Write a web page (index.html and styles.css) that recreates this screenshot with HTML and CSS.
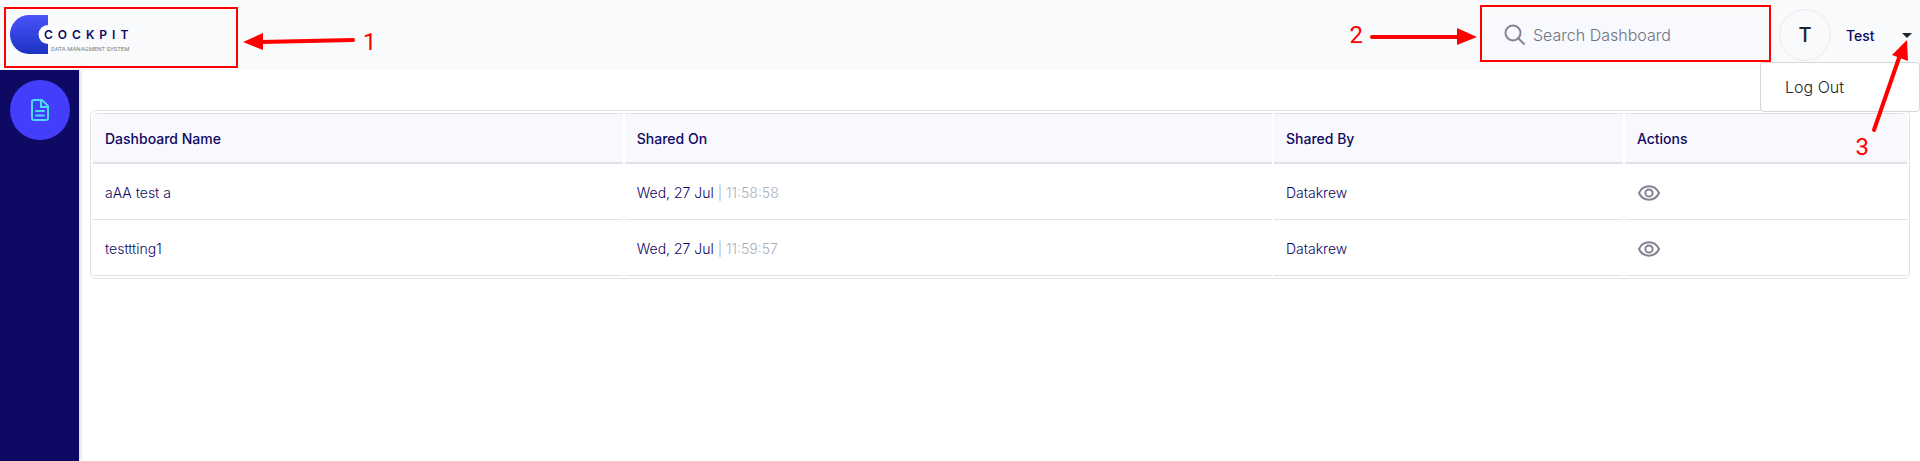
FILE: index.html
```html
<!DOCTYPE html>
<html lang="en">
  <head>
    <meta charset="UTF-8" />
    <meta name="viewport" content="width=device-width, initial-scale=1.0" />
    <title>Cockpit</title>
    <link rel="stylesheet" href="styles.css">
  </head>
  <body>
    <header class="topbar">
      <a href="#" class="brand">
        <svg class="brand-mark" width="60" height="40" viewBox="0 0 60 40" aria-hidden="true">
          <defs>
            <linearGradient id="brand-fill" x1="0" y1="0" x2="0" y2="1">
              <stop offset="0" stop-color="#4a54fb" />
              <stop offset="1" stop-color="#1a32c0" />
            </linearGradient>
          </defs>
          <path d="M19 0H38V39H19A19 19.500 0 0 1 19 0Z" fill="url(#brand-fill)" />
          <path d="M38 10H59V29H38A9.500 9.500 0 0 1 38 10Z" fill="#fff" />
        </svg>
        <span class="brand-text">
          <span class="brand-name">COCKPIT</span>
          <span class="brand-tagline">DATA MANAGMENT SYSTEM</span>
        </span>
      </a>

      <div class="topbar-right">
        <form class="search">
          <label for="search" aria-label="Search Dashboard">
            <svg width="22" height="22" viewBox="0 0 22 22" fill="none" stroke="#858592" stroke-width="2">
              <circle cx="9" cy="9" r="7.500" />
              <path d="M14 14L20.500 20.500" />
            </svg>
          </label>
          <input type="text" id="search" placeholder="Search Dashboard" />
        </form>
        <div class="avatar">T</div>
        <span class="user-name">Test</span>
        <button type="button" class="caret" aria-label="Account menu">
          <svg width="10" height="5" viewBox="0 0 10 5"><path d="M0 0H10L5 5Z" fill="#212529" /></svg>
        </button>
        <div class="user-menu">
          <a href="#">Log Out</a>
        </div>
      </div>
    </header>

    <div class="layout">
      <nav class="sidebar">
        <a href="#" class="nav-item" aria-label="Dashboards">
          <svg width="18" height="22" viewBox="0 0 18 22" fill="none" stroke="#4fd8f5" stroke-width="2" stroke-linejoin="round" stroke-linecap="round">
            <path d="M3 1H11L17 7V19A2 2 0 0 1 15 21H3A2 2 0 0 1 1 19V3A2 2 0 0 1 3 1Z" />
            <path d="M10 1V8H17" />
            <path d="M5 12H13M5 16.500H13" />
          </svg>
        </a>
      </nav>

      <main class="content">
        <table class="dashboards">
          <colgroup>
            <col class="col-name" />
            <col class="col-date" />
            <col class="col-owner" />
            <col class="col-actions" />
          </colgroup>
          <thead>
            <tr>
              <th>Dashboard Name</th>
              <th>Shared On</th>
              <th>Shared By</th>
              <th>Actions</th>
            </tr>
          </thead>
          <tbody>
            <tr>
              <td>aAA test a</td>
              <td>Wed, 27 Jul <span class="time">| 11:58:58</span></td>
              <td>Datakrew</td>
              <td>
                <button type="button" class="view" aria-label="View aAA test a">
                  <svg width="24" height="16" viewBox="0 0 24 16" fill="none" stroke="#858592" stroke-width="2">
                    <path d="M2 8C4 3.700 7.700 1.300 12 1.300S20 3.700 22 8C20 12.300 16.300 14.700 12 14.700S4 12.300 2 8Z" />
                    <circle cx="12" cy="8" r="3.600" />
                  </svg>
                </button>
              </td>
            </tr>
            <tr>
              <td>testtting1</td>
              <td>Wed, 27 Jul <span class="time">| 11:59:57</span></td>
              <td>Datakrew</td>
              <td>
                <button type="button" class="view" aria-label="View testtting1">
                  <svg width="24" height="16" viewBox="0 0 24 16" fill="none" stroke="#858592" stroke-width="2">
                    <path d="M2 8C4 3.700 7.700 1.300 12 1.300S20 3.700 22 8C20 12.300 16.300 14.700 12 14.700S4 12.300 2 8Z" />
                    <circle cx="12" cy="8" r="3.600" />
                  </svg>
                </button>
              </td>
            </tr>
          </tbody>
        </table>
      </main>
    </div>

    <!-- Numbered callouts -->
    <div class="callout-box box-brand"></div>
    <svg class="callout-arrow arrow-brand" width="112" height="18" viewBox="0 0 112 18" aria-hidden="true">
      <path d="M18 9L110 7" />
      <polygon points="0,9 20,0 20,17" />
    </svg>
    <span class="callout-number number-brand">1</span>

    <span class="callout-number number-search">2</span>
    <svg class="callout-arrow arrow-search" width="108" height="18" viewBox="0 0 108 18" aria-hidden="true">
      <path d="M2 9H90" />
      <polygon points="107,9 87,0 87,17" />
    </svg>
    <div class="callout-box box-search"></div>

    <svg class="callout-arrow arrow-menu" width="40" height="96" viewBox="0 0 40 96" aria-hidden="true">
      <path d="M4 90L29 18" />
      <polygon points="37,0 22,15 38,21" />
    </svg>
    <span class="callout-number number-menu">3</span>
  </body>
</html>
```
FILE: styles.css
```css
* {
  box-sizing: border-box;
}
body {
  margin: 0;
  min-height: 100vh;
  display: flex;
  flex-direction: column;
  position: relative;
  font-family: Inter, "Liberation Sans", sans-serif;
  font-size: 14px;
  color: #0e0963;
  background-color: #fff;
}
a {
  color: inherit;
  text-decoration: none;
}
button {
  padding: 0;
  border: none;
  background: none;
  cursor: pointer;
}
svg {
  display: block;
}

/* Top bar */
.topbar {
  display: flex;
  justify-content: space-between;
  align-items: center;
  height: 70px;
  background-color: #f8fafc;
}
.brand {
  display: grid;
  align-items: start;
  padding-left: 10px;
}
.brand-mark,
.brand-text {
  grid-area: 1 / 1;
}
.brand-text {
  display: flex;
  flex-direction: column;
  gap: 2px;
  padding: 12px 0 0 34px;
}
.brand-name {
  font-size: 12px;
  line-height: 16px;
  font-weight: 600;
  letter-spacing: 5px;
}
.brand-tagline {
  padding-left: 7px;
  font-family: Roboto, sans-serif;
  font-size: 6px;
  line-height: 8px;
  color: #7b7b85;
}
.topbar-right {
  display: flex;
  align-items: center;
  position: relative;
  padding-right: 8px;
}
.search {
  display: flex;
  align-items: center;
  gap: 7px;
  width: 276px;
  height: 38px;
  margin-right: 10px;
  padding-left: 11px;
  background-color: #f8f8ff;
  border-radius: 4px;
}
.search input {
  flex: 1;
  min-width: 0;
  padding: 0;
  border: none;
  outline: none;
  background: none;
  font-family: inherit;
  font-size: 16px;
  font-weight: 300;
}
.search input::placeholder {
  color: #6c757d;
  opacity: 1;
}
.avatar {
  display: flex;
  justify-content: center;
  align-items: center;
  width: 52px;
  height: 52px;
  margin-right: 15px;
  border: 1px solid #ececef;
  border-radius: 50%;
  font-size: 20px;
  font-weight: 500;
  color: #212529;
}
.user-name {
  width: 56px;
  font-weight: 500;
}
.user-menu {
  position: absolute;
  top: 100%;
  right: 0;
  width: 160px;
  margin-top: 1px;
  padding: 12px 24px;
  background-color: #fff;
  border: 1px solid #d5d6d8;
  border-radius: 4px;
  font-size: 16px;
  line-height: 24px;
  font-weight: 300;
  color: #212529;
}

/* Sidebar and content */
.layout {
  flex: 1;
  display: flex;
}
.sidebar {
  width: 79px;
  padding: 10px;
  background-color: #0e0963;
  box-shadow: 1px 0 4px rgba(0, 0, 0, 0.2);
  clip-path: inset(0 -8px 0 0);
}
.nav-item {
  display: flex;
  justify-content: center;
  align-items: center;
  width: 60px;
  height: 60px;
  border-radius: 50%;
  background-color: #433dfc;
}
.content {
  flex: 1;
  padding: 40px 10px 0 11px;
}
.dashboards {
  width: 100%;
  table-layout: fixed;
  border: 1px solid #dee2e6;
  border-radius: 6px;
  border-collapse: separate;
  border-spacing: 2px;
}
.col-name {
  width: 29.3%;
}
.col-date {
  width: 35.8%;
}
.col-owner {
  width: 19.3%;
}
.col-actions {
  width: 15.6%;
}
.dashboards th,
.dashboards td {
  padding: 0 12px;
  text-align: left;
  vertical-align: middle;
}
.dashboards th {
  height: 51px;
  background-color: #f8f8fd;
  border-top: 1px solid #dee2e6;
  border-bottom: 2px solid #dee2e6;
  font-weight: 500;
}
.dashboards th:first-child {
  border-top-left-radius: 6px;
}
.dashboards th:last-child {
  border-top-right-radius: 6px;
}
.dashboards td {
  height: 54px;
  border-bottom: 1px solid #dee2e6;
  font-weight: 300;
}
.time {
  color: #a9b1b9;
}
.view {
  display: block;
}

/* Callouts */
.callout-box,
.callout-arrow,
.callout-number {
  position: absolute;
  pointer-events: none;
}
.callout-box {
  border: 2px solid #f00;
}
.callout-arrow path {
  fill: none;
  stroke: #f00;
  stroke-width: 4;
  stroke-linecap: round;
}
.callout-arrow polygon {
  fill: #f00;
}
.callout-number {
  font-family: Roboto, Arial, sans-serif;
  font-size: 24px;
  line-height: 28px;
  color: #f00;
}
.box-brand {
  top: 7px;
  left: 4px;
  width: 234px;
  height: 61px;
}
.arrow-brand {
  top: 33px;
  left: 243px;
}
.number-brand {
  top: 28px;
  left: 363px;
}
.number-search {
  top: 21px;
  right: 557px;
}
.arrow-search {
  top: 28px;
  right: 442px;
}
.box-search {
  top: 5px;
  right: 149px;
  width: 291px;
  height: 57px;
}
.arrow-menu {
  top: 40px;
  right: 10px;
}
.number-menu {
  top: 133px;
  right: 51px;
}
```
